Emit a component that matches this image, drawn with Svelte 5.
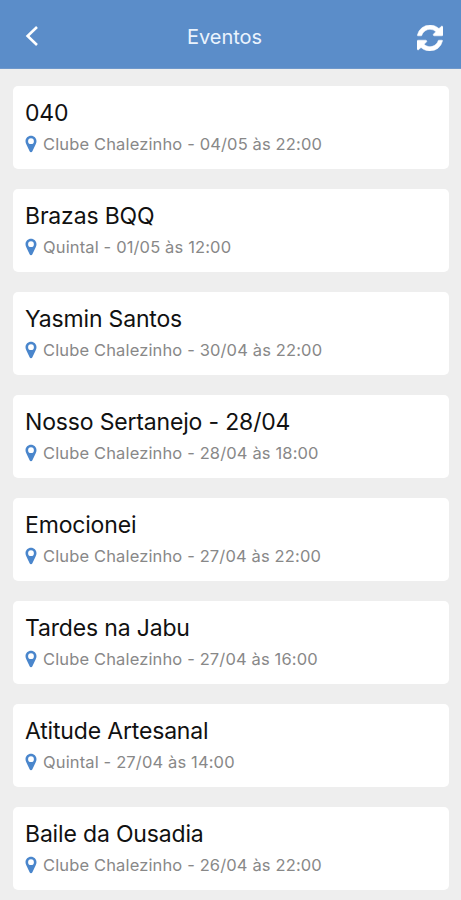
<script>
    let title = "Eventos";

    let events = [
        { name: "040", place: "Clube Chalezinho", date: "04/05", time: "22:00" },
        { name: "Brazas BQQ", place: "Quintal", date: "01/05", time: "12:00" },
        { name: "Yasmin Santos", place: "Clube Chalezinho", date: "30/04", time: "22:00" },
        { name: "Nosso Sertanejo - 28/04", place: "Clube Chalezinho", date: "28/04", time: "18:00" },
        { name: "Emocionei", place: "Clube Chalezinho", date: "27/04", time: "22:00" },
        { name: "Tardes na Jabu", place: "Clube Chalezinho", date: "27/04", time: "16:00" },
        { name: "Atitude Artesanal", place: "Quintal", date: "27/04", time: "14:00" },
        { name: "Baile da Ousadia", place: "Clube Chalezinho", date: "26/04", time: "22:00" }
    ];

    function refresh(){
        events = [...events];
    }
</script>

<header>
    <button class="back" aria-label="Voltar">
        <svg width="14" height="22" viewBox="0 0 14 22">
            <path d="M12 1L2.6 10L12 19" fill="none" stroke="currentColor" stroke-width="2.6" />
        </svg>
    </button>
    <h1>{title}</h1>
    <button class="refresh" aria-label="Atualizar" on:click={refresh}>
        <svg width="26" height="26" viewBox="0 0 1536 1536">
            <path fill="currentColor" stroke="currentColor" stroke-width="30" d="M1511 928q0 5-1 7-64 268-268 434.5T764 1536q-146 0-282.5-55T238 1324l-129 129q-19 19-45 19t-45-19-19-45V960q0-26 19-45t45-19h448q26 0 45 19t19 45-19 45l-137 137q71 66 161 102t187 36q134 0 250-65t186-179q11-17 53-117 8-23 30-23h192q13 0 22.5 9.5t9.5 22.5zm25-800v448q0 26-19 45t-45 19h-448q-26 0-45-19t-19-45 19-45l138-138Q969 256 768 256q-134 0-250 65T332 500q-11 17-53 117-8 23-30 23H50q-13 0-22.5-9.5T18 608v-7q65-268 270-434.5T768 0q146 0 284 55.5T1297 212l130-129q19-19 45-19t45 19 19 45z" />
        </svg>
    </button>
</header>

<ul>
    {#each events as event}
    <li>
        <h2>{event.name}</h2>
        <div class="info">
            <svg width="12" height="18" viewBox="0 0 12 18">
                <path fill="currentColor" fill-rule="evenodd" d="M6 .8C2.9.8.5 3.2.5 6.3c0 1.2.3 2 .8 3L4.6 16.3c.6 1.2 2.2 1.2 2.8 0L10.7 9.3c.5-1 .8-1.8.8-3C11.5 3.2 9.1.8 6 .8zM6 3.3a2.9 2.9 0 1 1 0 5.8a2.9 2.9 0 1 1 0-5.8z" />
            </svg>
            <p>{event.place} - {event.date} às {event.time}</p>
        </div>
    </li>
    {/each}
</ul>

<style>
    :global(body){
        background-color: #eeeeee;
        font-family: Inter, "Liberation Sans", sans-serif;
        height: 900px;
        overflow: hidden;
    }
    header{
        display: grid;
        grid-template-columns: 60px 1fr 60px;
        align-items: center;
        box-sizing: border-box;
        height: 69px;
        padding-top: 5px;
        color: white;
        background-color: #5b8dc9;
        border-bottom: 1px solid #6f98cb;
    }
    h1{
        margin: 0;
        padding-right: 12px;
        font-size: 20px;
        line-height: 24px;
        font-weight: 400;
        text-align: center;
        color: #eaf3fd;
    }
    button{
        display: flex;
        margin: 0;
        padding: 0;
        border: none;
        color: white;
        background: none;
    }
    .back{
        padding-left: 25px;
    }
    .refresh{
        padding-left: 16px;
        padding-top: 3px;
    }
    ul{
        display: flex;
        flex-direction: column;
        gap: 20px;
        margin: 0;
        padding: 17px 12.5px 0px;
    }
    li{
        box-sizing: border-box;
        height: 83px;
        padding: 12px 12.5px;
        list-style: none;
        background-color: white;
        border-radius: 5px;
    }
    h2{
        margin: 0;
        font-size: 23px;
        line-height: 30px;
        font-weight: 400;
        letter-spacing: -0.17px;
        color: #111;
    }
    .info{
        display: flex;
        align-items: center;
        gap: 6px;
        height: 32px;
        color: #4a86cc;
    }
    p{
        margin: 0;
        font-size: 16.5px;
        line-height: 22px;
        font-weight: 400;
        letter-spacing: 0.14px;
        color: #888;
    }
</style>
